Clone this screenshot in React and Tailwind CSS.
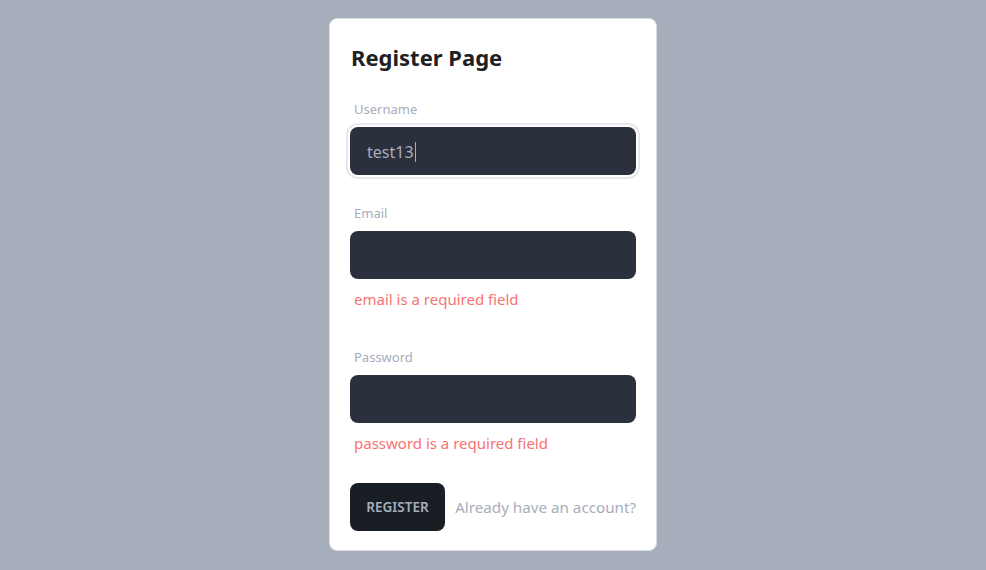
export default function App() {
  const font = { fontFamily: '"Noto Sans", "Open Sans", sans-serif' };
  return (
    <div className="min-h-[570px] w-full bg-[#a6adbb] flex justify-center pt-[18px]" style={font}>
      <div className="w-[328px] h-[533px] bg-white rounded-lg border border-[#d9dce1] p-5 flex flex-col">
        <h2 className="text-[22px] font-bold leading-[36px] text-[#1f2023] pl-px">Register Page</h2>
        <div className="mt-4 flex flex-col">
          <label className="px-1 py-2 text-[13px] leading-5 text-[#a6adbb]">Username</label>
          <div className="h-12 rounded-lg bg-[#2a303c] outline-2 outline-offset-2 outline-[#e7e8eb] flex items-center pl-[17px] pt-0.5 text-[16px] text-[#a6adbb]">
            test13<span className="inline-block w-px h-[20px] bg-[#a6adbb] ml-px" />
          </div>
        </div>
        <div className="mt-5 flex flex-col">
          <label className="px-1 py-2 text-[13px] leading-5 text-[#a6adbb]">Email</label>
          <div className="h-12 rounded-lg bg-[#2a303c]" />
          <span className="px-1 py-2 text-[15px] leading-6 text-[#f87272]">email is a required field</span>
        </div>
        <div className="mt-5 flex flex-col">
          <label className="px-1 py-2 text-[13px] leading-5 text-[#a6adbb]">Password</label>
          <div className="h-12 rounded-lg bg-[#2a303c]" />
          <span className="px-1 py-2 text-[15px] leading-6 text-[#f87272]">password is a required field</span>
        </div>
        <div className="mt-5 flex items-center justify-between">
          <button className="h-12 w-[95px] rounded-lg bg-[#191d24] text-[#a6adbb] text-[13.5px] font-semibold uppercase">Register</button>
          <span className="text-[15.2px] text-[#a6adbb]">Already have an account?</span>
        </div>
      </div>
    </div>
  );
}
